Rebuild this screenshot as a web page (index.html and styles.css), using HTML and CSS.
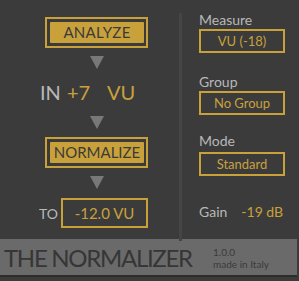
FILE: index.html
```html
<!DOCTYPE html>
<html lang="en">
<head>
  <meta charset="UTF-8" />
  <title>The Normalizer</title>
  <link rel="stylesheet" href="styles.css">
</head>
<body>
  <div id="plugin">
    <div class="panel">
      <div class="left">
        <div class="btn"><span>ANALYZE</span></div>
        <div class="arrow"></div>
        <div class="reading">
          <span class="lbl">IN</span>
          <span class="val">+7</span>
          <span class="val unit">VU</span>
        </div>
        <div class="arrow arrow-2"></div>
        <div class="btn btn-norm"><span>NORMALIZE</span></div>
        <div class="arrow"></div>
        <div class="target">
          <span class="to">TO</span>
          <div class="box target-box">-12.0 VU</div>
        </div>
      </div>

      <div class="divider"></div>

      <div class="right">
        <div class="field">
          <div class="field-label">Measure</div>
          <div class="box select">VU (-18)</div>
        </div>
        <div class="field">
          <div class="field-label">Group</div>
          <div class="box select">No Group</div>
        </div>
        <div class="field field-last">
          <div class="field-label">Mode</div>
          <div class="box select">Standard</div>
        </div>
        <div class="gain">
          <span class="field-label">Gain</span>
          <span class="gain-val">-19 dB</span>
        </div>
      </div>
    </div>

    <div class="footer">
      <div class="title">THE NORMALIZER</div>
      <div class="info">
        <div>1.0.0</div>
        <div>made in Italy</div>
      </div>
    </div>
  </div>
</body>
</html>
```

FILE: styles.css
```css
body {
  margin: 0;
  background: #2f2f2f;
  font-family: Lato, "Open Sans", sans-serif;
}
#plugin {
  width: 299px;
  height: 281px;
  background: #3b3b3b;
  overflow: hidden;
}
.panel {
  display: flex;
  height: 239px;
}
.left {
  width: 179px;
  display: flex;
  flex-direction: column;
  padding-top: 17px;
}
.btn {
  margin-left: 45px;
  width: 103px;
  height: 31px;
  box-sizing: border-box;
  border: 2px solid #c9a13b;
  padding: 3px 2px 3px 3px;
}
.btn span {
  display: block;
  height: 21px;
  background: #c9a13b;
  border-radius: 1px;
  color: #3a3a3a;
  font-size: 15px;
  line-height: 21px;
  text-align: center;
  letter-spacing: 0.3px;
}
.btn-norm span {
  letter-spacing: 0;
}
.arrow {
  margin: 8px 0 8px 90px;
  width: 0;
  height: 0;
  border-left: 7px solid transparent;
  border-right: 7px solid transparent;
  border-top: 13px solid #787878;
}
.reading {
  height: 31px;
  padding-top: 3px;
  display: flex;
  align-items: flex-start;
  font-size: 20px;
  line-height: 24px;
  padding-left: 40px;
}
.lbl {
  color: #b8b8b8;
}
.val {
  color: #c9a13b;
  margin-left: 6px;
}
.unit {
  margin-left: 17px;
}
.arrow-2 {
  margin-top: 5px;
}
.target {
  display: flex;
  align-items: center;
  padding-left: 39px;
  margin-top: 1px;
}
.to {
  color: #b8b8b8;
  font-size: 14px;
  width: 22px;
}
.box {
  box-sizing: border-box;
  border: 2px solid #c9a13b;
  color: #c9a13b;
  text-align: center;
}
.target-box {
  width: 87px;
  height: 30px;
  line-height: 26px;
  font-size: 15px;
}
.divider {
  width: 3px;
  background: #454545;
  margin: 13px 0 -2px;
}
.right {
  padding: 11px 0 0 17px;
  width: 86px;
}
.field {
  margin-bottom: 20px;
}
.field + .field {
  margin-bottom: 17px;
}
.field-last .select {
  margin-top: 2px;
}
.field-label {
  color: #b8b8b8;
  font-size: 14px;
  line-height: 18px;
}
.select {
  height: 24px;
  line-height: 20px;
  font-size: 13px;
}
.gain {
  margin-top: 27px;
  display: flex;
}
.gain-val {
  color: #c9a13b;
  font-size: 14px;
  margin-left: 14px;
  line-height: 18px;
}
.footer {
  height: 36px;
  width: 297px;
  background: #6a6a6a;
  display: flex;
  align-items: center;
  border-bottom: 2px solid #2d2d2d;
}
.title {
  flex-shrink: 0;
  white-space: nowrap;
  font-size: 24px;
  letter-spacing: -1.3px;
  color: #363636;
  padding-left: 4px;
  width: 213px;
  box-sizing: border-box;
}
.info {
  white-space: nowrap;
  font-size: 10px;
  line-height: 12px;
  color: #3a3a3a;
  padding-top: 1px;
}
```
